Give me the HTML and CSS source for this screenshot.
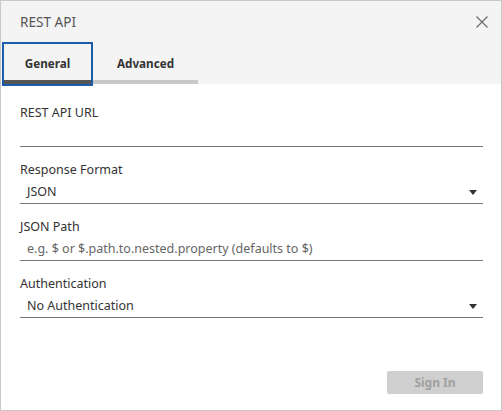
FILE: index.html
```html
<!DOCTYPE html>
<html>
<head>
<meta charset="utf-8">
<link rel="stylesheet" href="styles.css">
</head>
<body>
<div class="dialog">
  <div class="header">
    <div class="title-row">
      <span class="title">REST API</span>
      <svg class="close" width="12" height="12" viewBox="0 0 12 12"><path d="M0.5 0.5 L11.5 11.5 M11.5 0.5 L0.5 11.5" stroke="#666" stroke-width="1.1" fill="none"/></svg>
    </div>
    <div class="tabs">
      <div class="tab active">General</div>
      <div class="tab">Advanced</div>
    </div>
  </div>
  <div class="content">
    <div class="field">
      <div class="label">REST API URL</div>
      <div class="input"></div>
    </div>
    <div class="field">
      <div class="label">Response Format</div>
      <div class="input select"><span>JSON</span><span class="arrow"></span></div>
    </div>
    <div class="field">
      <div class="label">JSON Path</div>
      <div class="input"><span class="placeholder">e.g. $ or $.path.to.nested.property (defaults to $)</span></div>
    </div>
    <div class="field">
      <div class="label">Authentication</div>
      <div class="input select"><span>No Authentication</span><span class="arrow"></span></div>
    </div>
  </div>
  <div class="footer">
    <button class="btn">Sign In</button>
  </div>
</div>
</body>
</html>
```
FILE: styles.css
```css
html, body { margin: 0; padding: 0; background: #fff; }
body { font-family: "Noto Sans", "Liberation Sans", sans-serif; color: #333; }
.dialog {
  width: 502px; height: 411px; box-sizing: border-box;
  border: 1px solid #c9c9c9;
  display: flex; flex-direction: column;
}
.header { background: #f4f4f4; height: 83px; display: flex; flex-direction: column; }
.title-row {
  height: 43px; display: flex; align-items: center; justify-content: space-between;
  padding: 0 13px 0 19px; box-sizing: border-box;
}
.title { font-size: 13.6px; color: #555; position: relative; top: -1px; }
.close { position: relative; top: -1px; }
.tabs { display: flex; padding-left: 3px; height: 40px; }
.tab {
  height: 40px; box-sizing: border-box; border-bottom: 4px solid #c8c8c8;
  display: flex; align-items: center; justify-content: center;
  font-size: 11.7px; font-weight: bold; color: #333; padding-top: 2px;
}
.tab.active {
  width: 87px; border-bottom-color: #555;
  outline: 2px solid #1a5ea8; outline-offset: 0;
}
.tab + .tab { width: 105px; margin-left: 2px; }
.content { padding: 19px 18px 0 19px; display: flex; flex-direction: column; gap: 13px; }
.field { display: flex; flex-direction: column; }
.label { height: 19px; line-height: 19px; font-size: 12.5px; color: #333; }
.input {
  height: 25px; box-sizing: border-box; border-bottom: 1px solid #777;
  display: flex; align-items: center; justify-content: space-between;
  padding: 0 6px 0 7px; font-size: 12.5px; color: #333;
}
.placeholder { color: #666; }
.arrow {
  width: 0; height: 0; border-left: 4px solid transparent; border-right: 4px solid transparent;
  border-top: 5px solid #333; margin-top: 2px;
}
.footer { margin-top: auto; display: flex; justify-content: flex-end; padding: 0 18px 16px 0; }
.btn {
  width: 96px; height: 23px; border: none; border-radius: 2px; background: #cfcfcf;
  color: #a0a0a0; font-family: inherit; font-size: 12px; font-weight: bold; padding: 0;
}
```
